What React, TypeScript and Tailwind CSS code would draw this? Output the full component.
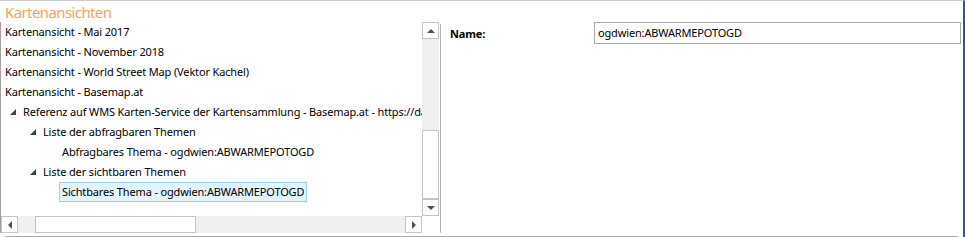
import React from "react";

const Tri = () => (
  <svg width="6" height="6" viewBox="0 0 6 6" className="shrink-0">
    <polygon points="6,0 6,6 0,6" fill="#404040" />
  </svg>
);

const Row = ({ indent, tri, text, selected }: { indent: number; tri?: boolean; text: string; selected?: boolean }) => (
  <div className="h-[20px] flex items-center whitespace-nowrap" style={{ paddingLeft: indent }}>
    {tri && (
      <div className="w-[13px] shrink-0 flex items-center">
        <Tri />
      </div>
    )}
    <span
      className={
        selected
          ? "shrink-0 px-[2px] h-[20px] flex items-center bg-[#e5f3fb] border border-[#99d1ef] -ml-[3px]"
          : "shrink-0"
      }
    >
      {text}
    </span>
  </div>
);

const ArrowBtn = ({ dir }: { dir: "up" | "down" | "left" | "right" }) => {
  const pts =
    dir === "up"
      ? "1,5 5,1 9,5"
      : dir === "down"
      ? "1,1 5,5 9,1"
      : dir === "left"
      ? "5,1 1,5 5,9"
      : "1,1 5,5 1,9";
  const w = dir === "up" || dir === "down" ? 10 : 6;
  const h = dir === "up" || dir === "down" ? 6 : 10;
  return (
    <div className="w-[17px] h-[17px] border border-[#c4c4c4] bg-white flex items-center justify-center shrink-0">
      <svg width={w} height={h} viewBox={`0 0 ${w} ${h}`}>
        <polygon points={pts} fill="#505050" />
      </svg>
    </div>
  );
};

export default function App() {
  return (
    <div
      className="w-[965px] h-[237px] bg-white relative overflow-hidden text-[11px] text-black"
      style={{ fontFamily: '"Noto Sans", "Open Sans", sans-serif' }}
    >
      <div className="border-t border-[#cfcfcf] h-full flex flex-col border-r-2 border-r-[#2b579a]">
        <div className="h-[21px] pl-[5px] pt-[1px] text-[15px] leading-[21px] tracking-[-0.6px] text-[#f4a25a]">
          Kartenansichten
        </div>
        <div className="flex h-[211px]">
          <div className="w-[440px] flex flex-col border-l border-[#a0a0a0] h-[211px]">
            <div className="flex h-[194px]">
              <div className="w-[421px] overflow-hidden pl-[4px] tracking-[-0.15px]">
                <Row indent={0} text="Kartenansicht - Mai 2017" />
                <Row indent={0} text="Kartenansicht - November 2018" />
                <Row indent={0} text="Kartenansicht - World Street Map (Vektor Kachel)" />
                <Row indent={0} text="Kartenansicht - Basemap.at" />
                <Row indent={5} tri text="Referenz auf WMS Karten-Service der Kartensammlung - Basemap.at - https://data.wien.gv.at" />
                <Row indent={25} tri text="Liste der abfragbaren Themen" />
                <Row indent={57} text="Abfragbares Thema - ogdwien:ABWARMEPOTOGD" />
                <Row indent={25} tri text="Liste der sichtbaren Themen" />
                <Row indent={57} text="Sichtbares Thema - ogdwien:ABWARMEPOTOGD" selected />
              </div>
              <div className="w-[17px] flex flex-col bg-[#f0f0f0]">
                <ArrowBtn dir="up" />
                <div className="h-[91px]" />
                <div className="h-[69px] border border-[#c4c4c4] bg-white" />
                <div className="flex-1" />
                <ArrowBtn dir="down" />
              </div>
            </div>
            <div className="flex h-[17px]">
              <div className="w-[421px] flex bg-[#f0f0f0]">
                <ArrowBtn dir="left" />
                <div className="w-[17px]" />
                <div className="w-[161px] border border-[#c4c4c4] bg-white" />
                <div className="flex-1" />
                <ArrowBtn dir="right" />
              </div>
              <div className="w-[17px] bg-white" />
            </div>
          </div>
          <div className="w-[1px] bg-[#b4b4b4] mt-[2px]" />
          <div className="flex-1 flex items-start pl-[9px]">
            <div className="w-[144px] font-bold h-[22px] mt-[1px] flex items-center tracking-[-0.15px]">Name:</div>
            <div className="w-[367px] h-[22px] border border-[#a9a9a9] flex items-center pl-[3px] tracking-[-0.15px]">
              ogdwien:ABWARMEPOTOGD
            </div>
          </div>
        </div>
        <div className="ml-[5px] mr-[5px] mt-[3px] h-[2px] bg-[#a9a9a9]" />
      </div>
    </div>
  );
}
